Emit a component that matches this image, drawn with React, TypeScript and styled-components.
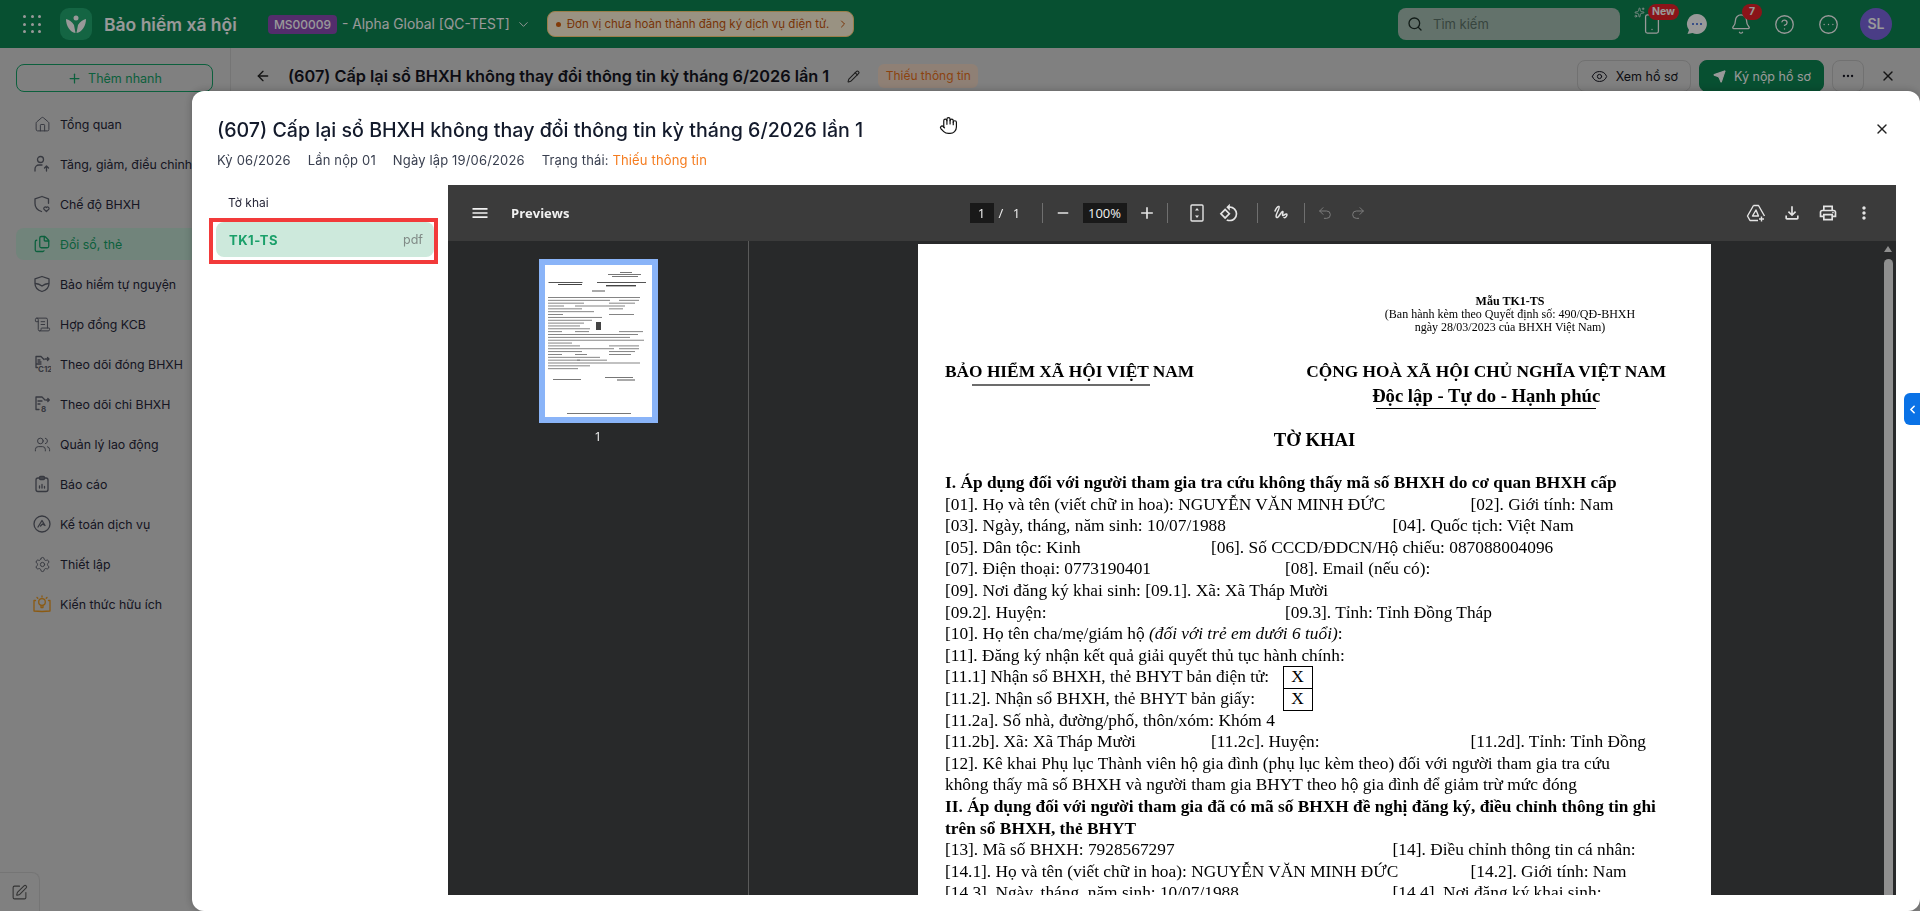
import { ArrowLeft, Bell, ChevronDown, ChevronLeft, ChevronRight, CircleEllipsis, CircleHelp, Ellipsis, Eye, Files, Hand, House, Pencil, Plus, Redo2, ScrollText, Search, Send, Settings, Smartphone, Sparkles, SquarePen, Undo2, Users, X } from 'lucide-react';
import { FunctionComponent, ReactNode } from 'react';
import { MdAdd, MdMenu, MdMoreVert, MdOutlineFileDownload, MdOutlinePrint, MdOutlineRotate90DegreesCcw, MdRemove } from 'react-icons/md';
import styled, { createGlobalStyle } from 'styled-components';

const GlobalStyle = createGlobalStyle`
	html, body {
		margin: 0;
		height: 100%;
		overflow: hidden;
		font-family: Inter, "Noto Sans", sans-serif;
	}
	* { box-sizing: border-box; }
`

const Shell = styled.div`
	width: 100%;
	height: 100vh;
	display: flex;
	flex-direction: column;
	background: #d5d5d5;
`

const TopBar = styled.header`
	height: 48px;
	flex: none;
	display: flex;
	align-items: center;
	padding-left: 23px;
	background: #0d8553;
	color: #fff;
`

const Dots = styled.div`
	width: 18px;
	display: grid;
	grid-template-columns: repeat(3, 3px);
	justify-content: space-between;
	row-gap: 4.5px;
	span { width: 3px; height: 3px; border-radius: 50%; background: #fff; }
`

const Logo = styled.div`
	width: 32px;
	height: 32px;
	margin-left: 19px;
	border-radius: 9px;
	background: #22a871;
	display: flex;
	align-items: center;
	justify-content: center;
`

const AppName = styled.div`
	margin-left: 12px;
	width: 164px;
	font-size: 17.5px;
	font-weight: 600;
	white-space: nowrap;
`

const OrgCode = styled.span`
	width: 69px;
	height: 19px;
	border-radius: 4px;
	background: #8a4bb4;
	font-size: 12px;
	font-weight: 500;
	line-height: 19px;
	text-align: center;
`

const OrgName = styled.span`
	margin-left: 5px;
	font-size: 13.8px;
	white-space: nowrap;
`

const Notice = styled.div`
	margin-left: 16px;
	width: 307px;
	height: 26px;
	display: flex;
	align-items: center;
	padding-left: 8px;
	border: 1px solid #ffd27a;
	border-radius: 8px;
	background: #fff3d9;
	color: #c8570c;
	font-size: 11.5px;
	white-space: nowrap;
`

const NoticeDot = styled.span`
	width: 5px;
	height: 5px;
	margin-right: 6px;
	border-radius: 50%;
	background: #d9620e;
`

const SearchBox = styled.div`
	margin-left: auto;
	width: 222px;
	height: 32px;
	display: flex;
	align-items: center;
	gap: 10px;
	padding-left: 9px;
	border-radius: 8px;
	background: #a5bfb3;
	color: #1f2f28;
	font-size: 13px;
`

const SearchHint = styled.span`
	color: #5d7369;
`

const TopIcons = styled.div`
	display: flex;
	align-items: center;
	margin-left: 21px;
	margin-right: 28px;
`

const TopIcon = styled.div<{ $w: number }>`
	position: relative;
	width: ${props => props.$w}px;
	display: flex;
	align-items: center;
`

const Badge = styled.span<{ $left: number }>`
	position: absolute;
	top: -9px;
	left: ${props => props.$left}px;
	height: 16px;
	padding: 0 4px;
	min-width: 20px;
	border-radius: 8px;
	background: #e8222a;
	color: #fff;
	font-size: 10.5px;
	font-weight: 700;
	line-height: 16px;
	text-align: center;
`

const Spark = styled.span`
	position: absolute;
	left: -7px;
	top: -6px;
	display: flex;
`

const Avatar = styled.div`
	width: 32px;
	height: 32px;
	border-radius: 50%;
	background: #7c66e0;
	font-size: 14px;
	font-weight: 600;
	line-height: 32px;
	text-align: center;
`

const Columns = styled.div`
	flex: 1;
	display: flex;
	min-height: 0;
`

const Sidebar = styled.aside`
	position: relative;
	width: 231px;
	flex: none;
	border-right: 1px solid #c4c4c4;
	padding: 16px 0 0 16px;
`

const QuickAdd = styled.div`
	width: 197px;
	height: 28px;
	display: flex;
	align-items: center;
	justify-content: center;
	gap: 6px;
	border: 1px solid #14a066;
	border-radius: 8px;
	color: #14a066;
	font-size: 12.5px;
`

const NavList = styled.nav`
	margin-top: 16px;
	display: flex;
	flex-direction: column;
	gap: 8px;
`

const NavItem = styled.div<{ $active?: boolean }>`
	height: 32px;
	display: flex;
	align-items: center;
	gap: 9px;
	padding-left: 17px;
	border-radius: 8px 0 0 8px;
	white-space: nowrap;
	font-size: 12.35px;
	color: ${props => props.$active ? '#14a066' : '#262638'};
	background: ${props => props.$active ? '#bcdccd' : 'transparent'};
`

const NavIcon = styled.span<{ $color?: string }>`
	width: 18px;
	height: 18px;
	display: flex;
	flex: none;
	align-items: center;
	justify-content: center;
	color: ${props => props.$color ?? '#5c5f6b'};
`

const FeedbackTab = styled.div`
	position: absolute;
	left: 0;
	bottom: 0;
	width: 40px;
	height: 39px;
	display: flex;
	align-items: center;
	justify-content: center;
	border: 1px solid #c4c4c4;
	border-left: 0;
	border-bottom: 0;
	border-top-right-radius: 8px;
	color: #555;
`

const Main = styled.main`
	flex: 1;
	min-width: 0;
`

const PageBar = styled.div`
	height: 56px;
	display: flex;
	align-items: center;
	padding: 0 24px 0 24px;
`

const PageTitle = styled.h1`
	margin: 0 0 0 17px;
	font-size: 16.3px;
	font-weight: 600;
	color: #141420;
	white-space: nowrap;
`

const StatusPill = styled.span`
	margin-left: 18px;
	width: 100px;
	height: 24px;
	border-radius: 6px;
	background: #efd6c4;
	color: #e8701a;
	font-size: 12px;
	line-height: 24px;
	text-align: center;
	white-space: nowrap;
`

const BarActions = styled.div`
	margin-left: auto;
	display: flex;
	align-items: center;
	gap: 8px;
`

const BarButton = styled.div<{ $primary?: boolean }>`
	height: 32px;
	display: flex;
	align-items: center;
	gap: 8px;
	padding: 0 12px 0 13px;
	border-radius: 8px;
	border: 1px solid ${props => props.$primary ? '#0d8553' : '#bdbdbd'};
	background: ${props => props.$primary ? '#0d8553' : 'transparent'};
	color: ${props => props.$primary ? '#fff' : '#141420'};
	font-size: 12.5px;
	white-space: nowrap;
`

const MoreButton = styled(BarButton)`
	width: 32px;
	padding: 0;
	justify-content: center;
`

const BarClose = styled.span`
	margin-left: 8px;
	display: flex;
`

const Overlay = styled.div`
	position: fixed;
	inset: 0;
	background: rgba(0, 0, 0, .4);
`

const Modal = styled.section`
	position: fixed;
	left: 192px;
	top: 91px;
	right: 0;
	bottom: 0;
	display: flex;
	flex-direction: column;
	border-radius: 12px;
	background: #fff;
	box-shadow: 0 0 8px rgba(0, 0, 0, .25);
	padding-bottom: 16px;
`

const ModalHead = styled.div`
	position: relative;
	padding: 27px 24px 0 25px;
	height: 94px;
	flex: none;
`

const ModalTitle = styled.h2`
	margin: 0;
	font-size: 19.6px;
	line-height: 24px;
	font-weight: 500;
	color: #131a2b;
	white-space: nowrap;
`

const MetaRow = styled.div`
	margin-top: 8px;
	display: flex;
	gap: 17px;
	font-size: 13px;
	line-height: 20px;
	letter-spacing: .15px;
	color: #3a4050;
`

const MetaState = styled.span`
	color: #f57c1f;
`

const ModalClose = styled.span`
	position: absolute;
	right: 30px;
	top: 30px;
	display: flex;
	color: #222;
`

const GrabCursor = styled.span`
	position: absolute;
	left: 747px;
	top: 25px;
	display: flex;
	color: #111;
`

const ModalBody = styled.div`
	flex: 1;
	display: flex;
	min-height: 0;
`

const FilePanel = styled.div`
	width: 256px;
	flex: none;
	padding-left: 17px;
`

const FileGroup = styled.div`
	height: 33px;
	padding: 10px 0 0 19px;
	font-size: 12px;
	line-height: 16px;
	color: #262638;
`

const Highlight = styled.div`
	width: 229px;
	height: 46px;
	padding: 0 0 0 3px;
	border: 4px solid #f23a3a;
`

const FileRow = styled.div`
	height: 35px;
	display: flex;
	align-items: center;
	justify-content: space-between;
	padding: 0 11px 0 13px;
	border-radius: 8px;
	background: #cde9dc;
`

const FileName = styled.span`
	font-size: 13px;
	font-weight: 700;
	letter-spacing: .5px;
	color: #1aa06a;
`

const FileKind = styled.span`
	font-size: 12.5px;
	color: #808a86;
`

const Viewer = styled.div`
	flex: 1;
	min-width: 0;
	margin-right: 24px;
	display: flex;
	flex-direction: column;
	background: #28292a;
	font-family: "Open Sans", Roboto, sans-serif;
	color: #f1f1f1;
`

const ViewerBar = styled.div`
	height: 56px;
	flex: none;
	display: grid;
	grid-template-columns: 1fr auto 1fr;
	align-items: center;
	background: #3b3b3b;
`

const BarLeft = styled.div`
	display: flex;
	align-items: center;
	gap: 21px;
	padding-left: 22px;
`

const ViewerTitle = styled.span`
	font-size: 13px;
	font-weight: 700;
`

const BarCenter = styled.div`
	display: flex;
	align-items: center;
	padding-right: 7px;
`

const BarRight = styled.div`
	display: flex;
	justify-content: flex-end;
	gap: 16px;
	padding-right: 22px;
`

const Field = styled.span<{ $w: number }>`
	width: ${props => props.$w}px;
	height: 20px;
	background: #191919;
	font-size: 13px;
	line-height: 20px;
	text-align: center;
`

const PageCount = styled.span`
	width: 48px;
	font-size: 13px;
	padding-left: 5px;
	word-spacing: 6px;
`

const Sep = styled.span`
	width: 1px;
	height: 20px;
	background: #6f6f6f;
`

const ToolIcon = styled.span<{ $w?: number, $ml?: number, $muted?: boolean }>`
	flex: none;
	width: ${props => props.$w ?? 20}px;
	margin-left: ${props => props.$ml ?? 0}px;
	display: flex;
	align-items: center;
	justify-content: center;
	color: ${props => props.$muted ? '#7c7c7c' : '#e4e4e4'};
`

const ViewerBody = styled.div`
	flex: 1;
	min-height: 0;
	display: flex;
	overflow: hidden;
`

const ThumbRail = styled.div`
	width: 301px;
	flex: none;
	display: flex;
	flex-direction: column;
	align-items: center;
	padding-top: 18px;
	border-right: 1px solid #5a5a5a;
`

const Thumb = styled.div`
	width: 119px;
	height: 164px;
	border: 6px solid #8ab4f8;
	background: #fff;
	svg { display: block; }
`

const ThumbLabel = styled.span`
	margin-top: 4px;
	font-size: 13px;
	line-height: 18px;
`

const DocArea = styled.div`
	flex: 1;
	min-width: 0;
	display: flex;
	justify-content: center;
	padding: 3px 1px 0 0;
`

const Paper = styled.article`
	width: 793px;
	flex: none;
	align-self: flex-start;
	padding: 51px 27px 0;
	background: #fff;
	color: #000;
	font-family: "Liberation Serif", "Times New Roman", serif;
	font-size: 17.33px;
	line-height: 21.6px;
`

const FormNote = styled.div`
	width: 300px;
	margin-left: 415px;
	font-size: 12px;
	line-height: 13px;
	text-align: center;
	strong { display: block; }
`

const NationRow = styled.div`
	margin-top: 26px;
	display: flex;
	font-weight: 700;
	line-height: 24px;
	white-space: nowrap;
`

const NationCol = styled.div<{ $offset: number }>`
	margin-left: ${props => props.$offset}px;
	display: flex;
	flex-direction: column;
	align-items: center;
`

const Motto = styled.span`
	font-size: 18.67px;
`

const Rule = styled.div<{ $w: number, $grey?: boolean }>`
	width: ${props => props.$w}px;
	height: ${props => props.$grey ? 2 : 1}px;
	background: ${props => props.$grey ? '#6c6c6c' : '#000'};
	align-self: ${props => props.$grey ? 'flex-start' : 'center'};
	margin-left: ${props => props.$grey ? 27 : 0}px;
`

const DocTitle = styled.div`
	margin-top: 19px;
	font-size: 18.67px;
	font-weight: 700;
	line-height: 24px;
	text-align: center;
`

const DocBody = styled.div`
	margin-top: 20px;
	white-space: nowrap;
`

const Line = styled.div<{ $bold?: boolean }>`
	display: flex;
	height: 21.6px;
	font-weight: ${props => props.$bold ? 700 : 400};
`

const Cell = styled.span<{ $w: number }>`
	flex: none;
	width: ${props => props.$w}px;
`

const TickBox = styled.span`
	width: 30px;
	height: 22.6px;
	border: 1px solid #000;
	text-align: center;
	line-height: 20px;
	position: relative;
	background: #fff;
`

const ScrollTrack = styled.div`
	position: relative;
	width: 15px;
	flex: none;
	padding-top: 18px;
`

const ScrollThumb = styled.div`
	width: 9px;
	height: 100%;
	margin-left: 3px;
	border-radius: 5px 5px 0 0;
	background: #8f8f8f;
`

const ScrollArrow = styled.span`
	position: absolute;
	top: 5px;
	left: 3px;
	border: 4.5px solid transparent;
	border-top: 0;
	border-bottom: 6px solid #8f8f8f;
`

const SideHandle = styled.div`
	position: fixed;
	right: 0;
	top: 393px;
	width: 16px;
	height: 32px;
	display: flex;
	align-items: center;
	justify-content: center;
	border-radius: 6px 0 0 6px;
	background: #0a72e6;
	color: #fff;
`

type IconProps = { children: ReactNode, size?: number }

const Glyph: FunctionComponent<IconProps> = ({ children, size = 18 }) => (
	<svg width={size} height={size} viewBox="0 0 18 18" fill="none" stroke="currentColor" strokeWidth="1.3" strokeLinecap="round" strokeLinejoin="round">{children}</svg>
);

const navItems: { label: string, icon: ReactNode, active?: boolean, color?: string }[] = [
	{ label: 'Tổng quan', icon: <House size={17} strokeWidth={1.4} /> },
	{ label: 'Tăng, giảm, điều chỉnh', icon: <Glyph><circle cx="7.5" cy="4.5" r="3" /><path d="M2 16v-2a4 4 0 0 1 4-4h3" /><path d="M13.5 16v-5M11.5 13l2-2 2 2" /></Glyph> },
	{ label: 'Chế độ BHXH', icon: <Glyph><path d="M9 1.5l6.5 2.4v4.4M8.5 16.5C5 15.4 2 12.500 2 8.500V3.900L9 1.500" /><path d="M13.400 16.500l-2.500-2.400a1.500 1.500 0 0 1 2.500-1.600 1.500 1.500 0 0 1 2.500 1.600z" /></Glyph> },
	{ label: 'Đổi sổ, thẻ', icon: <Files size={18} strokeWidth={1.7} />, active: true, color: '#14a066' },
	{ label: 'Bảo hiểm tự nguyện', icon: <Glyph><path d="M9 1.500l7 2.400v4.500c0 4-3 6.800-7 8.100-4-1.300-7-4.100-7-8.100V3.900z" /><path d="M2.500 8.500c3 .2 4.500 1 6.500 2.500 2-1.500 3.500-2.300 6.500-2.500" /></Glyph> },
	{ label: 'Hợp đồng KCB', icon: <ScrollText size={17} strokeWidth={1.4} /> },
	{ label: 'Theo dõi đóng BHXH', icon: <Glyph><path d="M8 9H3V1.500h5l3 3M3 9v3.500h1.500" /><path d="M5 5h2M5 7h3M12 4h4M14.500 2.500L16 4l-1.500 1.500" /><text x="5" y="16.800" fontSize="8" fontWeight="700" fill="currentColor" stroke="none" fontFamily="Inter, sans-serif">C12</text></Glyph> },
	{ label: 'Theo dõi chi BHXH', icon: <Glyph><path d="M3 11V2h6l3 3M3 11v3.500h3" /><path d="M5 6h4M5 9h2M13 5h3M14.800 3.500L16.300 5l-1.500 1.500" /><text x="8" y="16.500" fontSize="8" fontWeight="700" fill="currentColor" stroke="none" fontFamily="Inter, sans-serif">8</text></Glyph> },
	{ label: 'Quản lý lao động', icon: <Users size={17} strokeWidth={1.4} /> },
	{ label: 'Báo cáo', icon: <Glyph><rect x="3" y="3" width="12" height="13.500" rx="2" /><rect x="6.500" y="1.500" width="5" height="3" rx="1" /><path d="M6.500 13v-2M9 13V9.500M11.500 13v-1.500" /></Glyph> },
	{ label: 'Kế toán dịch vụ', icon: <Glyph><circle cx="9" cy="9" r="8" /><path d="M5 12l4-6.500 3 5-2.500-1.500-2 2" /></Glyph> },
	{ label: 'Thiết lập', icon: <Settings size={17} strokeWidth={1.4} /> },
	{ label: 'Kiến thức hữu ích', icon: <Glyph><circle cx="9" cy="7" r="3.300" /><path d="M8 10.500v2h2v-2M9 1v1M4 2.500l.8.800M14 2.500l-.8.800M1 5.500V16l8 .5 8-.5V5.500h-1.500M2.500 5.500H1" /></Glyph>, color: '#e8961e' },
];

// x, width pairs per text row of the miniature page, row y is computed below
const thumbRows: number[][] = [
	[3, 92], [3, 62, 74, 20], [3, 36, 64, 26], [3, 16, 30, 50], [3, 34, 64, 14], [3, 46],
	[3, 15, 64, 25], [3, 54], [3, 44], [3, 36], [3, 32], [3, 42], [3, 14, 30, 14, 74, 24],
	[3, 90], [3, 82], [3, 96], [3, 24], [3, 32, 64, 30], [3, 66, 74, 20], [3, 34, 64, 26],
	[3, 14, 30, 12, 64, 22], [3, 52], [3, 32, 32, 30], [3, 92], [3, 42], [3, 30],
];

const DocThumbnail: FunctionComponent = () => (
	<svg width="107" height="152" viewBox="0 0 107 152">
		<g fill="#777">
			<rect x="75" y="7" width="12" height="1" />
			<rect x="63" y="9" width="33" height="1" />
			<rect x="67" y="11" width="26" height="1" />
			<rect x="3.500" y="17" width="34" height="1" fill="#555" />
			<rect x="52" y="17" width="49" height="1" fill="#555" />
			<rect x="13" y="19" width="24" height="1" fill="#444" />
			<rect x="61" y="20" width="30" height="1.400" fill="#444" />
			<rect x="47" y="25.500" width="13" height="1" fill="#555" />
			{thumbRows.flatMap((row, r) => row.flatMap((v, i) => i % 2 ? [] :
				<rect key={`${r}-${i}`} x={v} y={32 + r * 2.85} width={row[i + 1]} height={0.9} />
			))}
			<rect x="60" y="112" width="28" height="1" />
			<rect x="8" y="114" width="28" height="1" />
			<rect x="72" y="114.500" width="18" height="1" fill="#555" />
			<rect x="22" y="148" width="64" height="1" />
		</g>
		<rect x="51" y="57" width="5" height="8" fill="#444" />
	</svg>
);

const App: FunctionComponent = () => (
	<Shell>
		<GlobalStyle />
		<TopBar>
			<Dots>{Array.from({ length: 9 }, (_, i) => <span key={i} />)}</Dots>
			<Logo>
				<svg width="22" height="20" viewBox="0 0 22 20" fill="#fff">
					<circle cx="11" cy="4" r="2.500" />
					<path d="M1 5c3 .5 6 2.500 8 6l1.500 8C5 18 1 12 1 5zM21 5c-3 .5-6 2.500-8 6l-1.500 8C17 18 21 12 21 5z" />
				</svg>
			</Logo>
			<AppName>Bảo hiểm xã hội</AppName>
			<OrgCode>MS00009</OrgCode>
			<OrgName>- Alpha Global [QC-TEST]</OrgName>
			<ChevronDown size={15} strokeWidth={1.5} style={{ marginLeft: 6 }} />
			<Notice>
				<NoticeDot />
				Đơn vị chưa hoàn thành đăng ký dịch vụ điện tử.
				<ChevronRight size={12} style={{ marginLeft: 8 }} />
			</Notice>
			<SearchBox><Search size={16} />
				<SearchHint>Tìm kiếm</SearchHint></SearchBox>
			<TopIcons>
				<TopIcon $w={45}>
					<Smartphone size={22} strokeWidth={1.4} />
					<Spark><Sparkles size={11} strokeWidth={1.5} /></Spark>
					<Badge $left={7}>New</Badge>
				</TopIcon>
				<TopIcon $w={44}>
					<svg width="22" height="22" viewBox="0 0 22 22">
						<path d="M11 1a10 10 0 1 1-4.500 19L1.500 21l1.500-4A10 10 0 0 1 11 1z" fill="#fff" />
						<circle cx="7" cy="11" r="1" fill="#2a5bd7" />
						<circle cx="11" cy="11" r="1" fill="#2a5bd7" />
						<circle cx="15" cy="11" r="1" fill="#2a5bd7" />
					</svg>
				</TopIcon>
				<TopIcon $w={44}>
					<Bell size={22} strokeWidth={1.4} />
					<Badge $left={12}>7</Badge>
				</TopIcon>
				<TopIcon $w={44}><CircleHelp size={21} strokeWidth={1.5} /></TopIcon>
				<TopIcon $w={42}><CircleEllipsis size={21} strokeWidth={1.5} /></TopIcon>
				<Avatar>SL</Avatar>
			</TopIcons>
		</TopBar>
		<Columns>
			<Sidebar>
				<QuickAdd><Plus size={15} />Thêm nhanh</QuickAdd>
				<NavList>
					{navItems.map(item =>
						<NavItem key={item.label} $active={item.active}>
							<NavIcon $color={item.color}>{item.icon}</NavIcon>
							{item.label}
						</NavItem>
					)}
				</NavList>
				<FeedbackTab><SquarePen size={17} strokeWidth={1.5} /></FeedbackTab>
			</Sidebar>
			<Main>
				<PageBar>
					<ArrowLeft size={16} color="#222" />
					<PageTitle>(607) Cấp lại sổ BHXH không thay đổi thông tin kỳ tháng 6/2026 lần 1</PageTitle>
					<Pencil size={13} color="#333" style={{ marginLeft: 18 }} />
					<StatusPill>Thiếu thông tin</StatusPill>
					<BarActions>
						<BarButton><Eye size={17} strokeWidth={1.4} />Xem hồ sơ</BarButton>
						<BarButton $primary><Send size={13} fill="currentColor" />Ký nộp hồ sơ</BarButton>
						<MoreButton><Ellipsis size={14} /></MoreButton>
						<BarClose><X size={16} color="#222" /></BarClose>
					</BarActions>
				</PageBar>
			</Main>
		</Columns>
		<Overlay />
		<Modal>
			<ModalHead>
				<ModalTitle>(607) Cấp lại sổ BHXH không thay đổi thông tin kỳ tháng 6/2026 lần 1</ModalTitle>
				<MetaRow>
					<span>Kỳ 06/2026</span>
					<span>Lần nộp 01</span>
					<span>Ngày lập 19/06/2026</span>
					<span>Trạng thái: <MetaState>Thiếu thông tin</MetaState></span>
				</MetaRow>
				<GrabCursor><Hand size={19} strokeWidth={1.5} /></GrabCursor>
				<ModalClose><X size={16} /></ModalClose>
			</ModalHead>
			<ModalBody>
				<FilePanel>
					<FileGroup>Tờ khai</FileGroup>
					<Highlight>
						<FileRow>
							<FileName>TK1-TS</FileName>
							<FileKind>pdf</FileKind>
						</FileRow>
					</Highlight>
				</FilePanel>
				<Viewer>
					<ViewerBar>
						<BarLeft>
							<MdMenu size={20} />
							<ViewerTitle>Previews</ViewerTitle>
						</BarLeft>
						<BarCenter>
							<Field $w={24}>1</Field>
							<PageCount>/ 1</PageCount>
							<Sep />
							<ToolIcon $w={40}><MdRemove size={18} /></ToolIcon>
							<Field $w={44}>100%</Field>
							<ToolIcon $w={40}><MdAdd size={20} /></ToolIcon>
							<Sep />
							<ToolIcon $ml={19}>
								<svg width="14" height="18" viewBox="0 0 14 18" fill="none" stroke="currentColor" strokeWidth="1.400">
									<rect x="1" y="1" width="12" height="16" rx="1" />
									<path d="M7 4l2 2.500H5zM7 14l-2-2.500h4z" fill="currentColor" stroke="none" />
								</svg>
							</ToolIcon>
							<ToolIcon $ml={12}><MdOutlineRotate90DegreesCcw size={20} /></ToolIcon>
							<ToolIcon $w={18} />
							<Sep />
							<ToolIcon $ml={14}>
								<svg width="18" height="18" viewBox="0 0 18 18" fill="none" stroke="currentColor" strokeWidth="1.500" strokeLinecap="round">
									<path d="M2 7c1-3 3-5 4-4.500S5.500 6 4 9s-1 5 .5 4.500S8 8 9.500 7.500s-1 4 .5 4 2-2 3.500-1.500-1 4.500-2.500 3.500" />
								</svg>
							</ToolIcon>
							<ToolIcon $w={12} />
							<Sep />
							<ToolIcon $ml={10} $muted><Undo2 size={16} strokeWidth={1.5} /></ToolIcon>
							<ToolIcon $ml={13} $muted><Redo2 size={16} strokeWidth={1.5} /></ToolIcon>
						</BarCenter>
						<BarRight>
							<ToolIcon>
								<svg width="20" height="20" viewBox="0 0 20 20" fill="none" stroke="currentColor" strokeWidth="1.400" strokeLinejoin="round">
									<path d="M7.500 2.500h5l6 10.500M7.500 2.500l-6 10.500 2.500 4.500h8" />
									<path d="M10 7l-3.500 6h6z" />
									<path d="M15.500 13.500v5M13 16h5" />
								</svg>
							</ToolIcon>
							<ToolIcon><MdOutlineFileDownload size={20} /></ToolIcon>
							<ToolIcon><MdOutlinePrint size={20} /></ToolIcon>
							<ToolIcon><MdMoreVert size={20} /></ToolIcon>
						</BarRight>
					</ViewerBar>
					<ViewerBody>
						<ThumbRail>
							<Thumb><DocThumbnail /></Thumb>
							<ThumbLabel>1</ThumbLabel>
						</ThumbRail>
						<DocArea>
							<Paper>
								<FormNote>
									<strong>Mẫu TK1-TS</strong>
									(Ban hành kèm theo Quyết định số: 490/QĐ-BHXH<br />
									ngày 28/03/2023 của BHXH Việt Nam)
								</FormNote>
								<NationRow>
									<NationCol $offset={0}>
										BẢO HIỂM XÃ HỘI VIỆT NAM
										<Rule $w={178} $grey />
									</NationCol>
									<NationCol $offset={112}>
										CỘNG HOÀ XÃ HỘI CHỦ NGHĨA VIỆT NAM
										<Motto>Độc lập - Tự do - Hạnh phúc</Motto>
										<Rule $w={220} />
									</NationCol>
								</NationRow>
								<DocTitle>TỜ KHAI</DocTitle>
								<DocBody>
									<Line $bold>I. Áp dụng đối với người tham gia tra cứu không thấy mã số BHXH do cơ quan BHXH cấp</Line>
									<Line><Cell $w={525.6}>[01]. Họ và tên (viết chữ in hoa): NGUYỄN VĂN MINH ĐỨC</Cell>[02]. Giới tính: Nam</Line>
									<Line><Cell $w={447.6}>[03]. Ngày, tháng, năm sinh: 10/07/1988</Cell>[04]. Quốc tịch: Việt Nam</Line>
									<Line><Cell $w={266}>[05]. Dân tộc: Kinh</Cell>[06]. Số CCCD/ĐDCN/Hộ chiếu: 087088004096</Line>
									<Line><Cell $w={340}>[07]. Điện thoại: 0773190401</Cell>[08]. Email (nếu có):</Line>
									<Line>[09]. Nơi đăng ký khai sinh: [09.1]. Xã: Xã Tháp Mười</Line>
									<Line><Cell $w={340}>[09.2]. Huyện:</Cell>[09.3]. Tỉnh: Tỉnh Đồng Tháp</Line>
									<Line><span>[10]. Họ tên cha/mẹ/giám hộ <em>(đối với trẻ em dưới 6 tuổi)</em>:</span></Line>
									<Line>[11]. Đăng ký nhận kết quả giải quyết thủ tục hành chính:</Line>
									<Line><Cell $w={337.6}>[11.1] Nhận sổ BHXH, thẻ BHYT bản điện tử:</Cell><TickBox>X</TickBox></Line>
									<Line><Cell $w={337.6}>[11.2]. Nhận sổ BHXH, thẻ BHYT bản giấy:</Cell><TickBox>X</TickBox></Line>
									<Line>[11.2a]. Số nhà, đường/phố, thôn/xóm: Khóm 4</Line>
									<Line><Cell $w={266}>[11.2b]. Xã: Xã Tháp Mười</Cell><Cell $w={259.6}>[11.2c]. Huyện:</Cell>[11.2d]. Tỉnh: Tỉnh Đồng</Line>
									<Line>[12]. Kê khai Phụ lục Thành viên hộ gia đình (phụ lục kèm theo) đối với người tham gia tra cứu</Line>
									<Line>không thấy mã số BHXH và người tham gia BHYT theo hộ gia đình để giảm trừ mức đóng</Line>
									<Line $bold>II. Áp dụng đối với người tham gia đã có mã số BHXH đề nghị đăng ký, điều chỉnh thông tin ghi</Line>
									<Line $bold>trên sổ BHXH, thẻ BHYT</Line>
									<Line><Cell $w={447.6}>[13]. Mã số BHXH: 7928567297</Cell>[14]. Điều chỉnh thông tin cá nhân:</Line>
									<Line><Cell $w={525.6}>[14.1]. Họ và tên (viết chữ in hoa): NGUYỄN VĂN MINH ĐỨC</Cell>[14.2]. Giới tính: Nam</Line>
									<Line><Cell $w={447.6}>[14.3]. Ngày, tháng, năm sinh: 10/07/1988</Cell>[14.4]. Nơi đăng ký khai sinh:</Line>
								</DocBody>
							</Paper>
						</DocArea>
						<ScrollTrack><ScrollArrow /><ScrollThumb /></ScrollTrack>
					</ViewerBody>
				</Viewer>
			</ModalBody>
		</Modal>
		<SideHandle><ChevronLeft size={13} strokeWidth={3} /></SideHandle>
	</Shell>
);

export default App;
